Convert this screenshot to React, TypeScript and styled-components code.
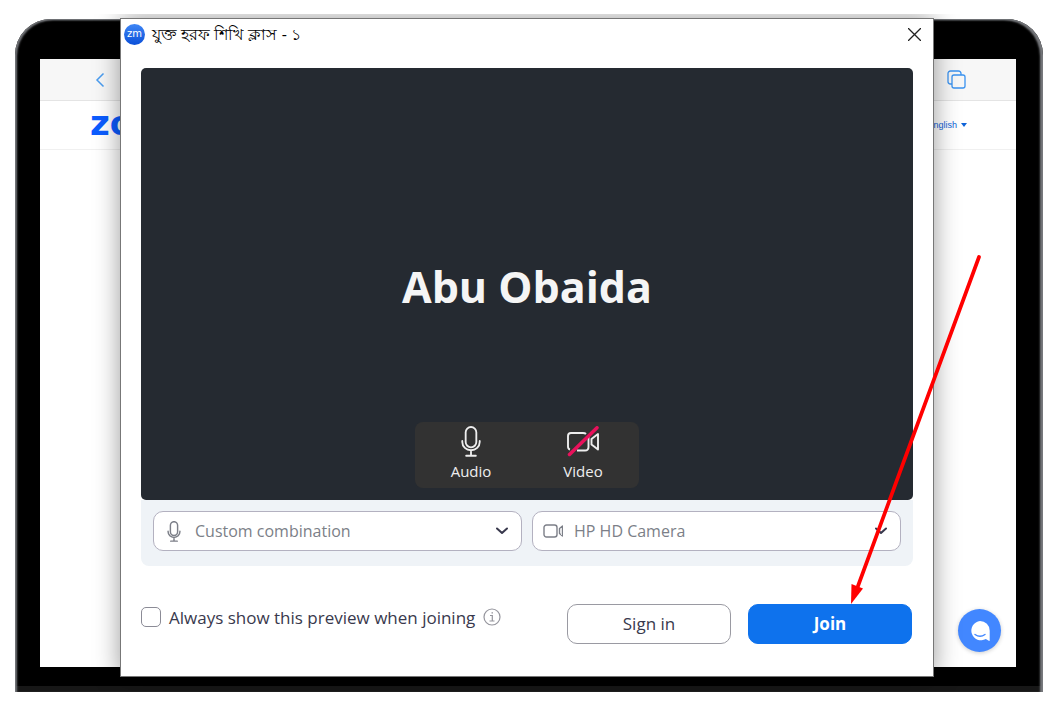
import React from 'react';
import styled, { createGlobalStyle } from 'styled-components';

const GlobalStyle = createGlobalStyle`
  *, *::before, *::after { box-sizing: border-box; }
  body {
    margin: 0;
    background: #fff;
    font-family: 'Open Sans', 'Noto Sans', sans-serif;
    font-size: 16px;
    color: #39394d;
  }
  button, select, input { font: inherit; color: inherit; }
`;

const Scene = styled.main`
  position: relative;
  margin: 14px 13px 0 15px;
  padding-top: 5px;
  overflow: clip;
`;

const Device = styled.div`
  display: flex;
  background: #000;
  padding: 40px 27px 25px 25px;
  border-radius: 36px 36px 0 0;
  box-shadow: inset 2px 1px 2px 0 #77797d, inset -3px 1px 2px 0 #77797d, inset 0 -6px 0 0 #171717;
`;

const Screen = styled.div`
  flex: 1;
  display: flex;
  flex-direction: column;
  min-height: 608px;
  background: #fff;
`;

const BrowserBar = styled.div`
  display: flex;
  align-items: center;
  justify-content: space-between;
  height: 42px;
  padding: 0 50px;
  background: #f7f7f7;
  border-bottom: 1px solid #e4e4e4;
`;

const IconButton = styled.button`
  display: flex;
  padding: 0;
  border: 0;
  background: none;
`;

const SiteHeader = styled.header`
  display: flex;
  align-items: center;
  justify-content: space-between;
  height: 49px;
  padding: 0 49px 0 50px;
  border-bottom: 1px solid #f0f0f0;
`;

const SiteLogo = styled.a`
  font: 700 34px/40px 'DejaVu Sans', sans-serif;
  color: #0b5cff;
  text-decoration: none;
  padding-bottom: 4px;
`;

const LanguageButton = styled.button`
  display: flex;
  align-items: center;
  gap: 4px;
  padding: 0;
  border: 0;
  background: none;
  font: 9px/12px 'Liberation Sans', sans-serif;
  color: #0e63d8;
`;

const ChatArea = styled.div`
  flex: 1;
  display: flex;
  align-items: flex-end;
  justify-content: flex-end;
  padding: 15px;
`;

const ChatButton = styled.button`
  display: flex;
  align-items: center;
  justify-content: center;
  width: 43px;
  height: 43px;
  padding: 0;
  border: 0;
  border-radius: 50%;
  background: #4287ff;
  box-shadow: 0 1px 4px #0003;
`;

const Dialog = styled.section`
  position: absolute;
  top: 4px;
  left: 105px;
  right: 109px;
  border: 1px solid #777;
  background: #fff;
  box-shadow: 0 0 24px #0006;
`;

const TitleBar = styled.header`
  display: flex;
  align-items: center;
  gap: 7px;
  height: 30px;
  padding: 0 12px 0 3px;
`;

const AppBadge = styled.span`
  display: flex;
  align-items: center;
  justify-content: center;
  width: 21px;
  height: 21px;
  border-radius: 50%;
  background: linear-gradient(#3f86f5, #0a4fd8);
  color: #fff;
  font: 400 10px/16px 'DejaVu Sans', sans-serif;
  padding-bottom: 1px;
`;

const Title = styled.h1`
  flex: 1;
  margin: 0;
  font-size: 16px;
  font-weight: 400;
  line-height: 24px;
  color: #000;
`;

const Body = styled.div`
  padding: 19px 20px 32px;
`;

const Preview = styled.div`
  display: grid;
  grid-template-rows: 1fr auto 1fr;
  justify-items: center;
  height: 432px;
  padding: 12px;
  border-radius: 5px;
  background: #252a31;
`;

const ParticipantName = styled.h2`
  grid-row: 2;
  margin: 0;
  padding-top: 6px;
  font-size: 43px;
  line-height: 60px;
  font-weight: 700;
  color: #f5f5f5;
`;

const MediaControls = styled.div`
  grid-row: 3;
  align-self: end;
  display: flex;
  width: 224px;
  height: 66px;
  border-radius: 8px;
  background: #323232;
`;

const MediaButton = styled.button`
  flex: 1;
  display: flex;
  flex-direction: column;
  align-items: center;
  gap: 2px;
  padding: 4px 0 0;
  border: 0;
  background: none;
  color: #eee;
  font-size: 15px;
  line-height: 24px;
`;

const DevicePanel = styled.div`
  display: grid;
  grid-template-columns: 1fr 1fr;
  gap: 10px;
  padding: 11px 12px 15px;
  border-radius: 0 0 8px 8px;
  background: #eff3f7;
`;

const SelectField = styled.label`
  display: flex;
  align-items: center;
  gap: 11px;
  height: 40px;
  padding: 0 13px 0 10px;
  border: 1px solid #b3b1c0;
  border-radius: 10px;
  background: #fff;
  color: #7c7f88;
`;

const Select = styled.select`
  flex: 1;
  min-width: 0;
  padding: 0;
  border: 0;
  appearance: none;
  background: none;
  font-size: 16px;
  line-height: 24px;
`;

const Footer = styled.footer`
  display: flex;
  align-items: flex-start;
  gap: 17px;
  padding: 38px 1px 0 0;
`;

const PreviewOption = styled.div`
  flex: 1;
  display: flex;
  align-items: center;
  gap: 8px;
  height: 26px;
  white-space: nowrap;
  font-size: 17px;
`;

const Checkbox = styled.input`
  appearance: none;
  width: 20px;
  height: 20px;
  margin: 0;
  border: 1px solid #8b8b96;
  border-radius: 5px;
  background: #fff;
`;

const ActionButton = styled.button<{ $primary?: boolean }>`
  width: 164px;
  height: 40px;
  padding: 0 0 2px;
  border: 1px solid ${p => (p.$primary ? '#0e72ed' : '#9a9aa2')};
  border-radius: 10px;
  background: ${p => (p.$primary ? '#0e72ed' : '#fff')};
  color: ${p => (p.$primary ? '#fff' : '#39394d')};
  font-size: 17px;
  font-weight: ${p => (p.$primary ? 700 : 400)};
`;

const JoinSlot = styled.div`
  position: relative;
`;

const Pointer = styled.svg`
  position: absolute;
  right: -71px;
  bottom: 100%;
  pointer-events: none;
`;

function MicIcon({ width, height, stroke = 1.9 }: { width: number; height: number; stroke?: number }) {
  return (
    <svg width={width} height={height} viewBox="0 0 20 32" fill="none" stroke="currentColor" strokeWidth={stroke} strokeLinecap="round">
      <rect x="4.500" y="1" width="11" height="21" rx="5.500" />
      <path d="M1 15.500v1a9 8.500 0 0 0 18 0v-1M10 25v5.500M5 30.700h10" />
    </svg>
  );
}

function Chevron() {
  return (
    <svg width="12" height="10" viewBox="0 0 12 10" fill="none" stroke="#39394d" strokeWidth="2" strokeLinecap="round" strokeLinejoin="round">
      <path d="M1 2.500l5 4.500 5-4.500" />
    </svg>
  );
}

export default function App() {
  return (
    <>
      <GlobalStyle />
      <Scene>
        <Device>
          <Screen>
            <BrowserBar>
              <IconButton aria-label="Back">
                <svg width="20" height="16" viewBox="0 0 20 16" fill="none" stroke="#4a9df0" strokeWidth="1.500">
                  <path d="M13.500 1.500L7 8l6.500 6.500" />
                </svg>
              </IconButton>
              <IconButton aria-label="Tabs">
                <svg width="19" height="19" viewBox="0 0 19 19" fill="none" stroke="#3b93f0" strokeWidth="1.300">
                  <rect x="5" y="5" width="13" height="13" rx="2" />
                  <path d="M5 14H3.500A2.500 2.500 0 0 1 1 11.500v-8A2.500 2.500 0 0 1 3.500 1h8A2.500 2.500 0 0 1 14 3.500V5" />
                </svg>
              </IconButton>
            </BrowserBar>
            <SiteHeader>
              <SiteLogo href="#">zoom</SiteLogo>
              <LanguageButton>
                English
                <svg width="6" height="4" viewBox="0 0 6 4" fill="currentColor"><path d="M0 0h6L3 4z" /></svg>
              </LanguageButton>
            </SiteHeader>
            <ChatArea>
              <ChatButton aria-label="Chat">
                <svg width="20" height="20" viewBox="0 0 20 20">
                  <path d="M10 0a9.700 9.700 0 0 1 9.700 9.700v9.600a.6.6 0 0 1-.9.500l-3-1.700A9.700 9.700 0 1 1 10 0z" fill="#fff" />
                  <path d="M5 13.500q5 3.500 10 0" fill="none" stroke="#4287ff" strokeWidth="1.400" strokeLinecap="round" />
                </svg>
              </ChatButton>
            </ChatArea>
          </Screen>
        </Device>

        <Dialog role="dialog" aria-labelledby="meeting-title">
          <TitleBar>
            <AppBadge>zm</AppBadge>
            <Title id="meeting-title" lang="bn">যুক্ত হরফ শিখি ক্লাস - ১</Title>
            <IconButton aria-label="Close">
              <svg width="13" height="13" viewBox="0 0 13 13" stroke="#222" strokeWidth="1.300">
                <path d="M0 0l13 13M13 0L0 13" />
              </svg>
            </IconButton>
          </TitleBar>
          <Body>
            <Preview>
              <ParticipantName>Abu Obaida</ParticipantName>
              <MediaControls>
                <MediaButton>
                  <MicIcon width={20} height={31} />
                  Audio
                </MediaButton>
                <MediaButton>
                  <svg width="32" height="31" viewBox="0 0 32 31" fill="none" stroke="currentColor" strokeWidth="1.900" strokeLinejoin="round">
                    <path d="M3 23.500Q1 23 1 20.500V10q0-3 3-3h12q2 0 3 1M21.500 11v10q0 3.500-3.500 3.500h-8" />
                    <path d="M31 8v15.500l-6.500-5v-5.500z" />
                    <path d="M2.500 28.500L30 1.800" stroke="#e8115b" strokeWidth="3.500" strokeLinecap="round" />
                  </svg>
                  Video
                </MediaButton>
              </MediaControls>
            </Preview>
            <DevicePanel>
              <SelectField>
                <MicIcon width={20} height={21} stroke={2.2} />
                <Select aria-label="Microphone"><option>Custom combination</option></Select>
                <Chevron />
              </SelectField>
              <SelectField>
                <svg width="20" height="14" viewBox="0 0 20 14" fill="none" stroke="currentColor" strokeWidth="1.400" strokeLinejoin="round">
                  <rect x="1" y="1" width="13" height="12" rx="2.500" />
                  <path d="M19.500 2v10l-3-2.500v-5z" />
                </svg>
                <Select aria-label="Camera"><option>HP HD Camera</option></Select>
                <Chevron />
              </SelectField>
            </DevicePanel>
            <Footer>
              <PreviewOption>
                <Checkbox type="checkbox" id="always-preview" />
                <label htmlFor="always-preview">Always show this preview when joining</label>
                <IconButton aria-label="About the preview">
                  <svg width="18" height="18" viewBox="0 0 18 18" fill="none" stroke="#95959d" strokeWidth="1.200">
                    <circle cx="9" cy="9" r="8" />
                    <path d="M7 7.500h2.300V13M6.500 13h5M8.500 4.800h1.500" />
                  </svg>
                </IconButton>
              </PreviewOption>
              <ActionButton>Sign in</ActionButton>
              <JoinSlot>
                <ActionButton $primary>Join</ActionButton>
                <Pointer width="134" height="350" viewBox="0 0 134 350" aria-hidden="true">
                  <path d="M130 3L9 332" stroke="#f00" strokeWidth="3.700" strokeLinecap="round" />
                  <path d="M2 350L2.500 330L14 334.500z" fill="#f00" />
                </Pointer>
              </JoinSlot>
            </Footer>
          </Body>
        </Dialog>
      </Scene>
    </>
  );
}
